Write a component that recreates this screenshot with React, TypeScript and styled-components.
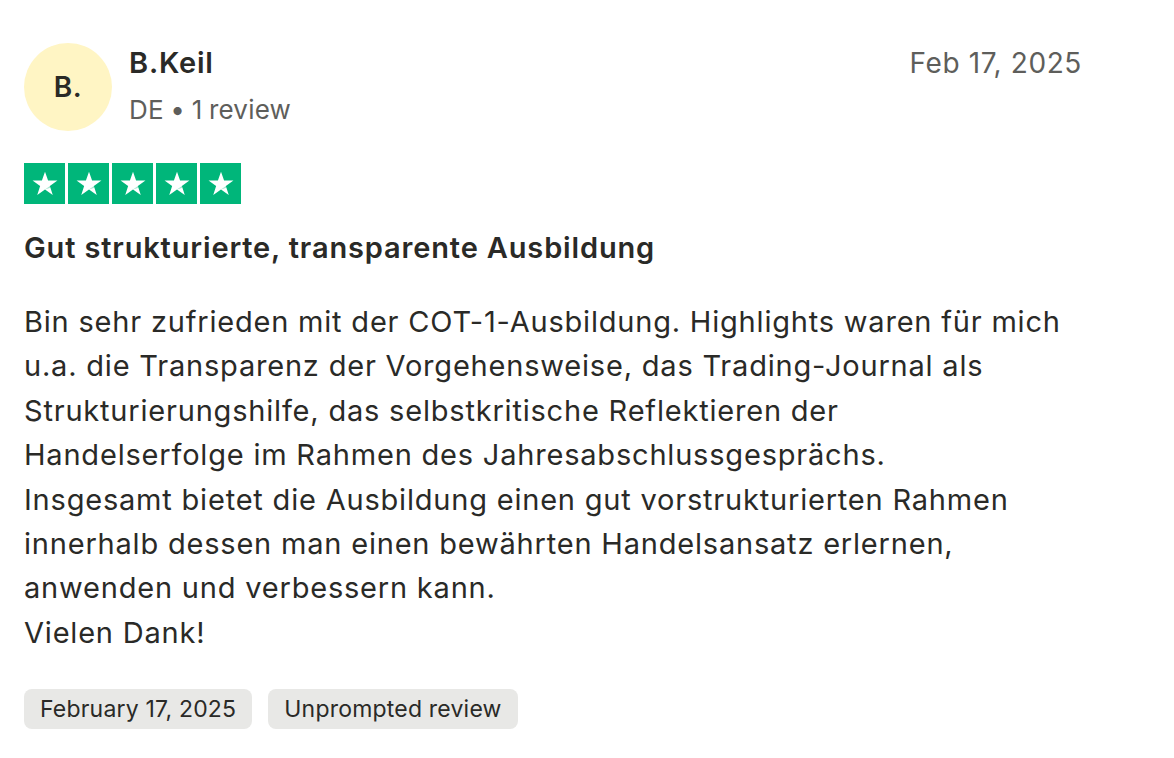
import React from 'react';
import styled, { createGlobalStyle } from 'styled-components';

const GlobalStyle = createGlobalStyle`
   body {
      margin: 0;
      background: #ffffff;
      font-family: Inter, "Noto Sans", "Liberation Sans", sans-serif;
      color: #2a2a27;
   }
`;

const Card = styled.article`
   padding: 43px 92px 30px 24px;
`;

const Header = styled.header`
   display: flex;
   align-items: flex-start;
`;

const Avatar = styled.div`
   width: 88px;
   height: 88px;
   border-radius: 50%;
   background: #fff5c4;
   display: flex;
   align-items: center;
   justify-content: center;
   font-size: 28px;
   font-weight: 600;
   letter-spacing: 0.5px;
   color: #2a2a27;
   flex-shrink: 0;
`;

const Info = styled.div`
   margin-left: 17px;
   display: flex;
   flex-direction: column;
   flex: 1;
`;

const Name = styled.div`
   font-size: 29px;
   font-weight: 600;
   letter-spacing: 0.8px;
   line-height: 40px;
   margin-bottom: 7px;
`;

const Meta = styled.div`
   font-size: 26px;
   line-height: 40px;
   color: #5e5e5b;
   word-spacing: -1px;
   letter-spacing: 0.2px;
`;

const DateLabel = styled.time`
   font-size: 28px;
   letter-spacing: 0.6px;
   line-height: 40px;
   color: #5e5e5b;
`;

const Stars = styled.div`
   display: flex;
   gap: 3px;
   margin-top: 32px;
`;

const StarBox = styled.div<{ $color: string }>`
   width: 41px;
   height: 41px;
   background: ${(p) => p.$color};
   display: flex;
   align-items: center;
   justify-content: center;
`;

const Title = styled.h2`
   margin: 22px 0 0;
   font-size: 29px;
   font-weight: 600;
   letter-spacing: 0.85px;
   line-height: 44px;
`;

const Body = styled.p`
   margin: 30px 0 0;
   font-size: 29px;
   letter-spacing: 0.8px;
   line-height: 44.4px;
   white-space: pre-line;
`;

const Tags = styled.div`
   display: flex;
   gap: 16px;
   margin-top: 34px;
`;

const Tag = styled.span`
   height: 40px;
   padding: 0 16px;
   display: inline-flex;
   align-items: center;
   border-radius: 8px;
   background: #e8e8e6;
   font-size: 23px;
   letter-spacing: 0.2px;
   color: #2a2a27;
`;

const Star = () => (
   <svg width="30" height="30" viewBox="0 0 24 24">
      <path
         fill="#ffffff"
         d="M12 2.2l2.47 7.04h7.48l-6.06 4.36 2.31 7.1L12 16.3l-6.2 4.4 2.31-7.1-6.06-4.36h7.48z"
      />
      <path fill="#00b67a" opacity="0.35" d="M15.9 13.6l.45 1.38L12 16.3z" />
   </svg>
);

const review = {
   initials: 'B.',
   name: 'B.Keil',
   country: 'DE',
   reviews: 1,
   date: 'Feb 17, 2025',
   longDate: 'February 17, 2025',
   rating: 5,
   title: 'Gut strukturierte, transparente Ausbildung',
   text: [
      'Bin sehr zufrieden mit der COT-1-Ausbildung. Highlights waren für mich',
      'u.a. die Transparenz der Vorgehensweise, das Trading-Journal als',
      'Strukturierungshilfe, das selbstkritische Reflektieren der',
      'Handelserfolge im Rahmen des Jahresabschlussgesprächs.',
      'Insgesamt bietet die Ausbildung einen gut vorstrukturierten Rahmen',
      'innerhalb dessen man einen bewährten Handelsansatz erlernen,',
      'anwenden und verbessern kann.',
      'Vielen Dank!',
   ].join('\n'),
};

const App: React.FC = () => {
   return (
      <>
         <GlobalStyle />
         <Card>
            <Header>
               <Avatar>{review.initials}</Avatar>
               <Info>
                  <Name>{review.name}</Name>
                  <Meta>
                     {review.country} • {review.reviews} review
                  </Meta>
               </Info>
               <DateLabel>{review.date}</DateLabel>
            </Header>
            <Stars>
               {[1, 2, 3, 4, 5].map((n) => (
                  <StarBox key={n} $color={n <= review.rating ? '#00b67a' : '#dcdce6'}>
                     <Star />
                  </StarBox>
               ))}
            </Stars>
            <Title>{review.title}</Title>
            <Body>{review.text}</Body>
            <Tags>
               <Tag>{review.longDate}</Tag>
               <Tag>Unprompted review</Tag>
            </Tags>
         </Card>
      </>
   );
};

export default App;
